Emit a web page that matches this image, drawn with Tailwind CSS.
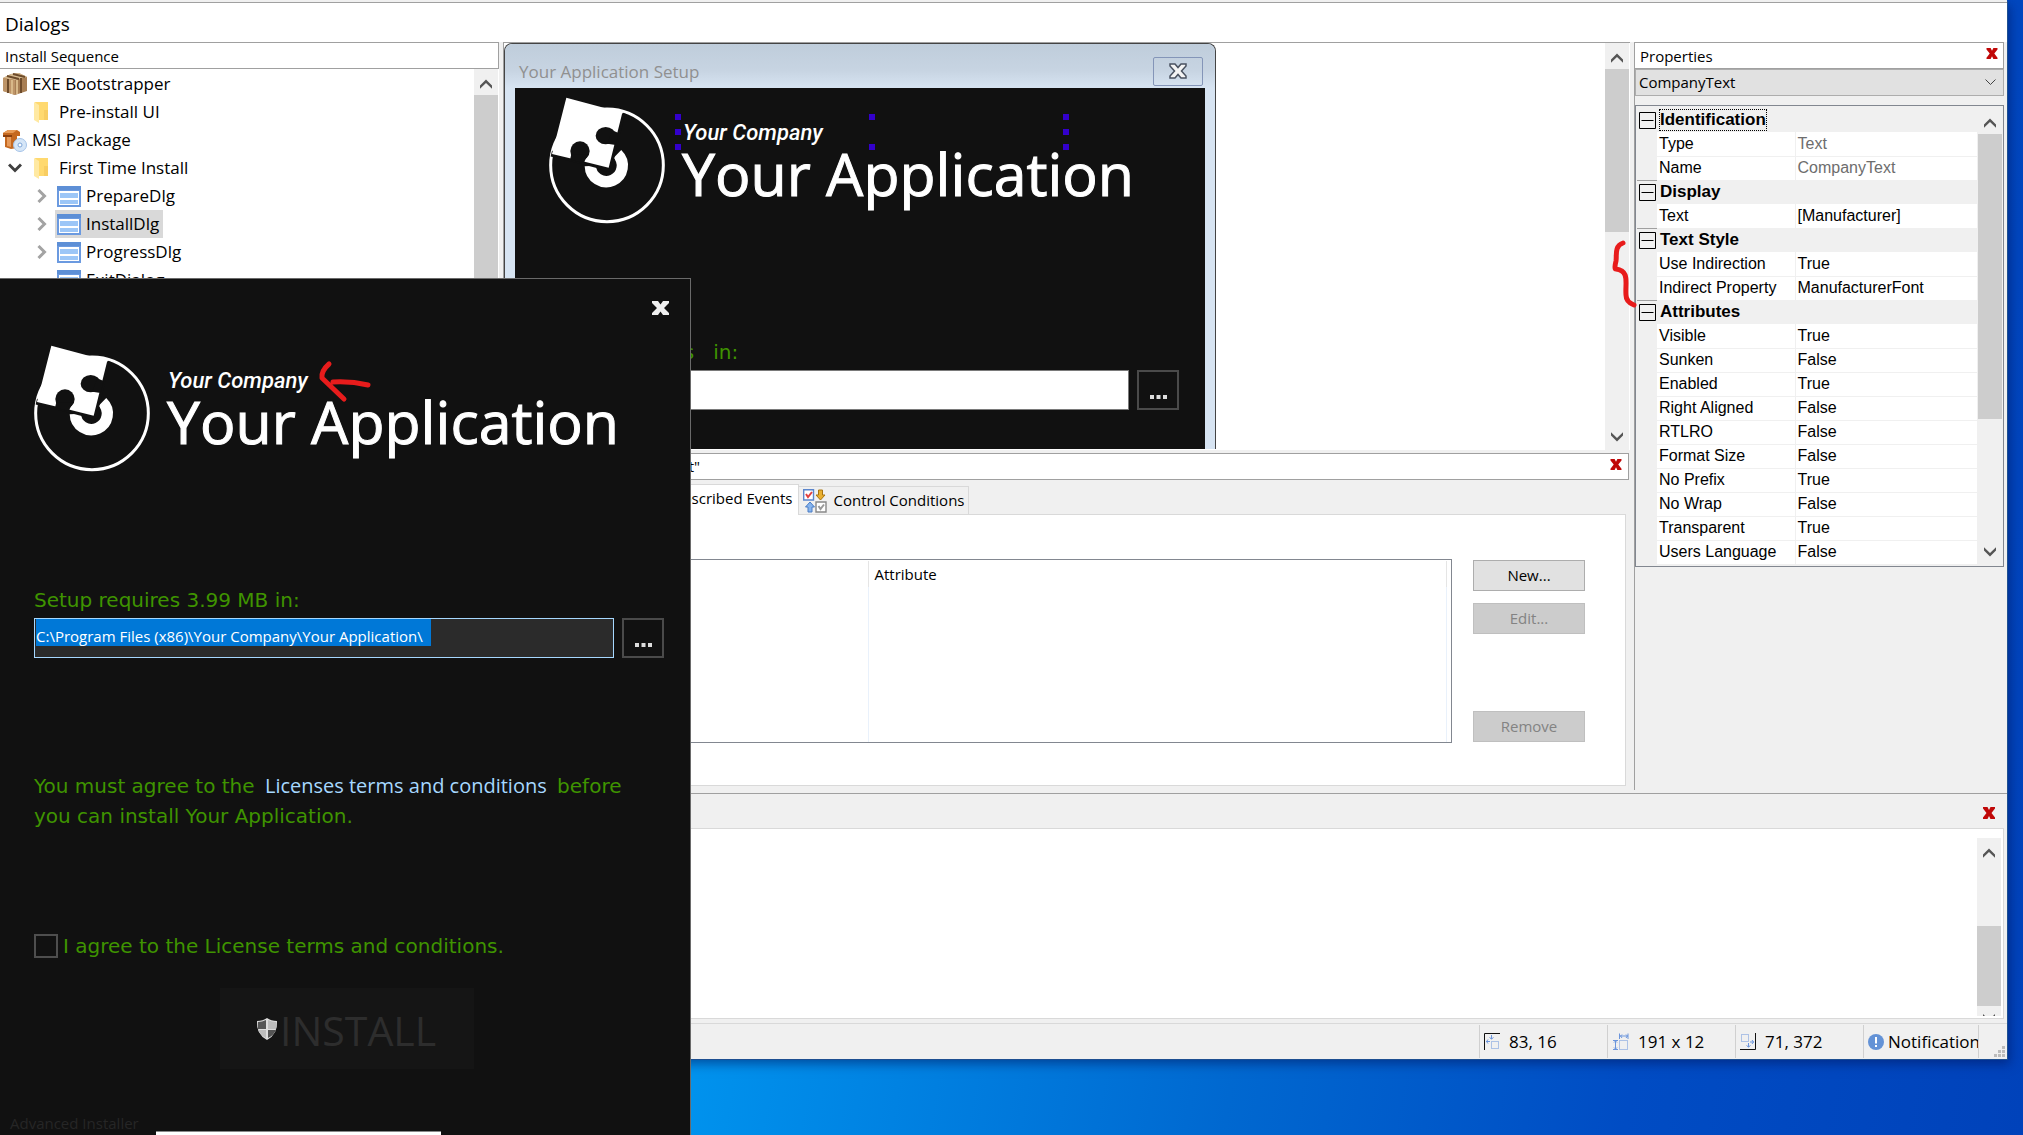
<!DOCTYPE html>
<html lang="en">
<head>
<meta charset="utf-8">
<title>Dialogs</title>
<script src="https://cdn.jsdelivr.net/npm/@tailwindcss/browser@4"></script>
</head>
<body class="relative h-screen overflow-hidden bg-[linear-gradient(100deg,#009cf4_34%,#0068d0_64%,#004cc4_82%,#0042ba_100%)] font-['Open_Sans',sans-serif] text-[15px] text-black">

<svg class="hidden" aria-hidden="true">
  <symbol id="logo" viewBox="40 40 357 393">
    <circle cx="217" cy="251" r="169" fill="none" stroke="#fff" stroke-width="9"/>
    <path d="M248 217A48 48 0 1 1 167 253" fill="none" stroke="#fff" stroke-width="34"/>
    <path d="M264 94L222 259 148 240 50 216" fill="none" stroke="#111" stroke-width="18"/>
    <path d="M226 246L240 230Q246 262 226 270Q206 276 190 254Z" fill="#111"/>
    <path d="M95 48L210 79 268 89 262 97 222 258 150 240 52 217Z" fill="#fff"/>
    <ellipse cx="213" cy="162" rx="30" ry="26" fill="#111"/>
    <path d="M232 146L252 154 243 190 218 186Z" fill="#111"/>
    <circle cx="136" cy="208" r="29" fill="#111"/>
    <path d="M110 218L106 234 148 244 151 236 162 218Z" fill="#111"/>
  </symbol>
  <symbol id="up" viewBox="0 0 12 10"><path d="M0 6.500L6 0.500 12 6.500V9.800L6 4 0 9.800Z" fill="#555"/></symbol>
  <symbol id="down" viewBox="0 0 12 10"><path d="M0 3.500L6 9.500 12 3.500V0.200L6 6 0 0.200Z" fill="#555"/></symbol>
  <symbol id="right" viewBox="0 0 10 14"><path d="M1.500 1L7.500 7 1.500 13" fill="none" stroke="#a3a3a3" stroke-width="3"/></symbol>
  <symbol id="redx" viewBox="0 0 12 12"><path d="M0 0H4.500L6 3 7.500 0H12V1.500L8.500 6 12 10.500V12H7.500L6 9 4.500 12H0V10.500L3.500 6 0 1.500Z" fill="#c00808"/></symbol>
  <symbol id="folder" viewBox="0 0 15 22"><path d="M1 1H14V19H5Z" fill="#ffd96f"/><path d="M0 1L5 4V22L0 19Z" fill="#ffe9a2"/><path d="M10 9H14V19H10Z" fill="#f8cd62"/></symbol>
  <symbol id="dialog" viewBox="0 0 24 21"><path d="M0 0H24V21H0Z" fill="#6b9ae0"/><path d="M0 0H24V4H0Z" fill="#5d8fd6"/><path d="M2 5H22V19H2Z" fill="#fff"/><path d="M3 7H21V12H3ZM3 14H21V18H3Z" fill="#9cc6f7"/></symbol>
</svg>

<main class="absolute top-0 left-0 right-4 bottom-[76px] flex flex-col bg-[#f0f0f0] shadow-[1px_1px_0_#1d4f91,3px_5px_10px_rgba(0,20,90,.5)]">
  <div class="h-[3px] shrink-0 border-b border-[#a0a0a0] bg-[#f0f0f0]"></div>
  <h1 class="flex h-[39px] shrink-0 items-center bg-white px-[5px] pt-2 pb-1 text-[19px]">Dialogs</h1>

  <div class="flex h-[748px] shrink-0">
    <aside class="flex w-[499px] shrink-0 flex-col bg-white">
      <h2 class="flex h-[27px] shrink-0 items-center border border-l-0 border-[#a0a0a0] pt-[2px] pl-[5px]">Install Sequence</h2>
      <div class="flex flex-1">
        <ul class="flex-1 pt-px text-[17px] leading-7 *:flex *:h-7 *:items-center">
          <li class="gap-[5px] pl-[3px]">
            <svg class="h-[23px] w-6" viewBox="0 0 24 23"><path d="M0 5L8 1 16 0 24 4V18L12 22 0 18Z" fill="#a77e54"/><path d="M0 5L8 1 16 0 24 4 12 7Z" fill="#d9bd92"/><path d="M0 5L12 7V22L0 18Z" fill="#bd9468"/><path d="M5 6V20M18 5V20M4 3L16 6M10 1L22 4" stroke="#6d4b2b" stroke-width="2"/><path d="M9 7V21M14 7V21" stroke="#d8b889" stroke-width="2"/></svg>EXE Bootstrapper</li>
          <li class="gap-[10px] pl-[34px]"><svg class="h-[22px] w-[15px]"><use href="#folder"/></svg>Pre-install UI</li>
          <li class="gap-[5px] pl-[3px]">
            <svg class="h-[23px] w-6" viewBox="0 0 24 23"><path d="M0 4L5 1H14L17 3V7H14V19L8 20 2 18V8L0 7Z" fill="#c5681f"/><path d="M0 4L5 1H14L10 4Z" fill="#e89a55"/><path d="M4 8H8V18L4 17Z" fill="#e69a5a"/><path d="M0 7H9" stroke="#8b3f0c" stroke-width="2"/><circle cx="17" cy="16" r="6.500" fill="#d6e6f7" stroke="#a5c3e8"/><circle cx="17" cy="16" r="2" fill="#fff" stroke="#7ba4d8"/></svg>MSI Package</li>
          <li class="pl-2"><svg class="mr-3 h-[10px] w-[14px]" viewBox="0 0 14 10"><path d="M1 1.500L7 7.500 13 1.500" fill="none" stroke="#404040" stroke-width="3"/></svg><svg class="mr-[10px] h-[22px] w-[15px]"><use href="#folder"/></svg>First Time Install</li>
          <li class="pl-[37px]"><svg class="mr-2 h-[14px] w-[10px]"><use href="#right"/></svg><span class="flex items-center gap-[5px] px-[2px] pr-1"><svg class="h-[21px] w-6"><use href="#dialog"/></svg>PrepareDlg</span></li>
          <li class="pl-[37px]"><svg class="mr-2 h-[14px] w-[10px]"><use href="#right"/></svg><span class="flex items-center gap-[5px] bg-[#d9d9d9] px-[2px] pr-1"><svg class="h-[21px] w-6"><use href="#dialog"/></svg>InstallDlg</span></li>
          <li class="pl-[37px]"><svg class="mr-2 h-[14px] w-[10px]"><use href="#right"/></svg><span class="flex items-center gap-[5px] px-[2px] pr-1"><svg class="h-[21px] w-6"><use href="#dialog"/></svg>ProgressDlg</span></li>
          <li class="pl-[55px]"><span class="flex items-center gap-[5px] px-[2px]"><svg class="h-[21px] w-6"><use href="#dialog"/></svg>ExitDialog</span></li>
        </ul>
        <div class="mr-px w-6 bg-[#cdcdcd]"><div class="flex h-[26px] items-center justify-center bg-[#f0f0f0] pt-1"><svg class="h-[10px] w-3"><use href="#up"/></svg></div></div>
      </div>
    </aside>

    <section class="ml-1 flex min-w-0 flex-1 flex-col">
      <div class="flex h-[408px] shrink-0 border-t border-l border-[#a0a0a0] bg-white">
        <div class="flex-1">
          <div class="relative flex h-[406px] w-[712px] flex-col rounded-t-lg border border-b-0 border-[#444] bg-[#d7e4f2] px-[10px]">
            <div class="-mx-[10px] flex h-11 shrink-0 items-center justify-between rounded-t-lg bg-[linear-gradient(#bfcddb,#c7d4e2_60%,#d7e4f2)] pt-3 pr-[12px] pb-[2px] pl-[14px] text-[17px] text-[#909090]">
              <span class="pt-[2px]">Your Application Setup</span>
              <button aria-label="Close preview" class="flex h-[29px] w-[50px] items-center justify-center rounded-xs border border-[#8495b8]"><svg class="h-4 w-[18px]" viewBox="0 0 18 16"><path d="M1 1H6L9 4.500 12 1H17V3L12.500 8 17 13V15H12L9 11.500 6 15H1V13L5.500 8 1 3Z" fill="#f4f4f4" stroke="#4a5260" stroke-width="1.500"/></svg></button>
            </div>
            <div class="flex-1 bg-[#111] pt-[7px] pl-[33px] text-white">
              <div class="flex h-[131px] gap-[15px]">
                <svg class="h-[131px] w-[119px]"><use href="#logo"/></svg>
                <div class="pt-7">
                  <p class="pl-px font-['Roboto',sans-serif] text-[22px] leading-5 font-medium italic">Your Company</p>
                  <p class="text-[59px] leading-[60px] [-webkit-text-stroke:1px_white]">Your Application</p>
                </div>
              </div>
              <p class="mt-28 font-['DejaVu_Sans',sans-serif] text-[20px] leading-7 whitespace-pre text-[#3f9400]">Setup requires   in:</p>
              <div class="mt-1 flex gap-2 pl-px">
                <input aria-label="Install folder preview" class="h-10 w-[580px] border border-[#7a7a7a] bg-white">
                <button aria-label="Browse preview" class="flex h-10 w-[42px] items-end justify-center border-2 border-[#4a4a4a] pb-[9px]"><svg class="h-1 w-[17px]" viewBox="0 0 17 4"><path d="M0 0H4V4H0ZM6.500 0H10.500V4H6.500ZM13 0H17V4H13Z" fill="#ddd"/></svg></button>
              </div>
            </div>
            <div class="absolute top-[70px] left-[170px] grid w-[394px] grid-cols-[6px_6px_6px] justify-between gap-y-[9px] *:h-[6px]">
              <i class="bg-[#3300cc]"></i><i class="bg-[#3300cc]"></i><i class="bg-[#3300cc]"></i>
              <i class="bg-[#3300cc]"></i><i></i><i class="bg-[#3300cc]"></i>
              <i class="bg-[#3300cc]"></i><i class="bg-[#3300cc]"></i><i class="bg-[#3300cc]"></i>
            </div>
          </div>
        </div>
        <div class="mr-px flex w-6 flex-col bg-[#f0f0f0]">
          <div class="flex h-[26px] items-center justify-center pt-1"><svg class="h-[10px] w-3"><use href="#up"/></svg></div>
          <div class="h-[163px] bg-[#cdcdcd]"></div>
          <div class="mt-auto flex h-[26px] items-center justify-center"><svg class="h-[10px] w-3"><use href="#down"/></svg></div>
        </div>
      </div>

      <div class="mt-[3px] mr-px flex h-[27px] shrink-0 items-center justify-between border border-[#a0a0a0] bg-white pr-[6px]">
        <span class="w-[196px] text-right">"CompanyText"</span>
        <button aria-label="Close events"><svg class="mb-1 h-[11px] w-3"><use href="#redx"/></svg></button>
      </div>
      <div class="mt-1 flex h-[30px] shrink-0 items-end pl-[157px]">
        <button class="relative -mb-px flex h-[31px] items-center border border-b-0 border-[#d9d9d9] bg-white pr-[6px] pb-1 pl-1">Subscribed Events</button>
        <button class="flex h-7 items-center gap-[6px] border border-b-0 border-l-0 border-[#d9d9d9] px-1">
          <svg class="h-6 w-6" viewBox="0 0 24 24"><path d="M.7 .7H10.500V11H.7Z" fill="#fff" stroke="#5b85cc" stroke-width="1.400"/><path d="M3 5L5 8 9 3" fill="none" stroke="#e04040" stroke-width="2"/><path d="M15.500 1H19.500V6H22L17.500 11 13 6H15.500Z" fill="#eab030" stroke="#a87410"/><path d="M5 23H9V18H11.500L7 13 2.500 18H5Z" fill="#86b4ee" stroke="#4a7cc4"/><path d="M13 13H23V23H13Z" fill="#fff" stroke="#888" stroke-width="1.400"/><path d="M15.500 17L17.500 20 21 15.500" fill="none" stroke="#999" stroke-width="2"/></svg>
          Control Conditions</button>
      </div>
      <div class="mr-[4px] ml-1 flex h-[272px] shrink-0 border border-[#d9d9d9] bg-white pt-11 pr-10 pl-2">
        <div class="mr-[21px] h-[184px] flex-1 border border-[#828790] pt-px pr-1">
          <table class="h-full w-full table-fixed border-collapse text-left">
            <thead><tr class="h-[26px]"><th class="w-[351px] border-r border-[#e5e5e5]"></th><th class="border-r border-[#e5e5e5] pl-[6px] font-normal">Attribute</th></tr></thead>
            <tbody><tr><td class="border-r border-[#e9f1fb]"></td><td class="border-r border-[#e9f1fb]"></td></tr></tbody>
          </table>
        </div>
        <div class="flex h-[183px] w-28 flex-col gap-3 pt-px *:h-[31px] *:shrink-0 *:border">
          <button class="border-[#adadad] bg-[#e1e1e1]">New...</button>
          <button disabled class="border-[#bfbfbf] bg-[#cccccc] text-[#838383]">Edit...</button>
          <button disabled class="mt-auto border-[#bfbfbf] bg-[#cccccc] text-[#838383]">Remove</button>
        </div>
      </div>
    </section>

    <aside class="ml-1 w-[373px] shrink-0 border-l border-[#a0a0a0] pr-[3px]">
      <div class="flex h-[27px] items-center justify-between border border-l-0 border-[#a0a0a0] bg-white pr-[5px] pl-[5px]">
        <h2 class="pt-px">Properties</h2>
        <button aria-label="Close properties"><svg class="mb-1 h-[11px] w-3"><use href="#redx"/></svg></button>
      </div>
      <div class="relative">
        <select aria-label="Control" class="block h-[27px] w-full appearance-none border border-[#adadad] bg-[#e1e1e1] px-[3px] text-[15px]"><option>CompanyText</option></select>
        <svg class="pointer-events-none absolute top-[10px] right-2 h-[7px] w-[11px]" viewBox="0 0 11 7"><path d="M.5 .5L5.500 5.500 10.500 .5" fill="none" stroke="#444"/></svg>
      </div>
      <div class="mt-[9px] flex border border-[#828790] p-px pt-[2px] font-['Liberation_Sans',sans-serif] text-[16px]">
        <table class="flex-1 border-collapse"><tbody id="properties"></tbody></table>
        <div class="ml-px flex w-6 flex-col">
          <div class="flex h-[26px] items-center justify-center pt-1"><svg class="h-[10px] w-3"><use href="#up"/></svg></div>
          <div class="h-[285px] bg-[#cdcdcd]"></div>
          <div class="mt-auto flex h-[26px] items-center justify-center"><svg class="h-[10px] w-3"><use href="#down"/></svg></div>
        </div>
      </div>
    </aside>
  </div>

  <section class="mt-[3px] flex flex-1 flex-col border-t border-[#a0a0a0] bg-[#f0f0f0]">
    <div class="flex h-[34px] shrink-0 items-center justify-end pt-1 pr-3"><button aria-label="Close log"><svg class="h-3 w-3"><use href="#redx"/></svg></button></div>
    <div class="mr-[3px] mb-1 flex flex-1 justify-end border border-[#d9d9d9] bg-white pt-[9px] pr-[2px] pb-[2px]">
      <div class="flex w-6 flex-col overflow-hidden bg-[#f0f0f0]">
        <div class="flex h-[30px] shrink-0 items-center justify-center"><svg class="h-[10px] w-3"><use href="#up"/></svg></div>
        <div class="mt-auto h-20 shrink-0 bg-[#cdcdcd]"></div>
        <div class="flex h-[10px] shrink-0 items-end justify-center"><svg class="h-[2px] w-3" viewBox="0 0 12 2"><path d="M0 0L2 2H0ZM12 0L10 2H12Z" fill="#555"/></svg></div>
      </div>
    </div>
  </section>

  <footer class="flex h-9 shrink-0 items-stretch justify-end border-t border-[#d9d9d9] py-px text-[17px] *:flex *:items-center *:border-l *:border-[#d0d0d0]">
    <div class="w-32 gap-[9px] pl-1"><svg class="h-[17px] w-4" viewBox="0 0 16 17"><path d="M.5 17V.5H16" fill="none" stroke="#111"/><path d="M7.500 8.500H14.500V15.500H7.500Z" fill="none" stroke="#6b95dc" stroke-dasharray="1 1"/><path d="M2 8.500H6M4 6.500L2.500 8.500 4 10.500M7.500 2V6M5.500 4.500L7.500 6 9.500 4.500" fill="none" stroke="#6b95dc"/></svg>83, 16</div>
    <div class="w-32 gap-[9px] pl-[5px]"><svg class="h-[17px] w-4" viewBox="0 0 16 17"><path d="M6.500 7.500H14.500V16.500H6.500Z" fill="none" stroke="#6b95dc" stroke-dasharray="1 1"/><path d="M6.500 .5V6M15 .5V6M7 3H15M9 1.500L7.500 3 9 5M13 1.500L14.500 3 13 5M0 7.500H5M0 16.500H5M2.500 7.500V16M1 9.500L2.500 8 4 9.500M1 14.500L2.500 16 4 14.500" fill="none" stroke="#6b95dc"/></svg>191 x 12</div>
    <div class="w-32 gap-[9px] pl-1"><svg class="h-[17px] w-4" viewBox="0 0 16 17"><path d="M15.500 0V16.500H0" fill="none" stroke="#111"/><path d="M1.500 1.500H8.500V8.500H1.500Z" fill="none" stroke="#6b95dc" stroke-dasharray="1 1"/><path d="M10 9H14M12 7L13.500 9 12 11M8.500 10V14M6.500 12.500L8.500 14 10.500 12.500" fill="none" stroke="#6b95dc"/></svg>71, 372</div>
    <div class="w-[115px] gap-1 overflow-hidden pl-1"><svg class="h-4 w-4 shrink-0" viewBox="0 0 16 16"><circle cx="8" cy="8" r="8" fill="#6392d6"/><path d="M7 3H9V9.500H7ZM7 11H9V13H7Z" fill="#fff"/></svg>Notification</div>
    <div class="w-[29px] items-end! justify-end pr-[2px] pb-px"><svg class="h-[11px] w-[11px]" viewBox="0 0 11 11"><path d="M8 0H11V3H8ZM8 4H11V7H8ZM4 4H7V7H4ZM0 8H3V11H0ZM4 8H7V11H4ZM8 8H11V11H8Z" fill="#bcbcbc"/></svg></div>
  </footer>
</main>

<svg class="absolute top-[238px] right-[386px] h-[72px] w-[28px]" viewBox="0 0 28 72"><path d="M14 5C5 8 8 18 7 23Q5 31 7 31C21 33 16 45 17 57Q17 64 25 67" fill="none" stroke="#e81c1c" stroke-width="5" stroke-linecap="round" stroke-linejoin="round"/></svg>

<section class="absolute top-[278px] bottom-0 left-0 flex w-[691px] flex-col border-t border-r border-[#6a6a6a] bg-[#111] font-['DejaVu_Sans',sans-serif] text-[20px] text-[#3f9400]">
  <div class="flex h-16 shrink-0 items-start justify-end pt-[22px] pr-[21px]">
    <button aria-label="Close"><svg class="h-[14px] w-[17px]" viewBox="0 0 17 14"><path d="M0 0H6L8.500 3.500 11 0H17V2L12 7 17 12V14H11L8.500 10.500 6 14H0V12L5 7 0 2Z" fill="#f0f0f0"/></svg></button>
  </div>
  <div class="flex h-[131px] shrink-0 gap-[15px] pl-[33px] text-white">
    <svg class="h-[131px] w-[119px]"><use href="#logo"/></svg>
    <div class="pt-7">
      <p class="pl-px font-['Roboto',sans-serif] text-[22px] leading-5 font-medium italic">Your Company</p>
      <p class="font-['Open_Sans',sans-serif] text-[59px] leading-[60px] [-webkit-text-stroke:1px_white]">Your Application</p>
    </div>
  </div>
  <svg class="absolute top-[78px] left-[315px] h-[46px] w-[60px]" viewBox="0 0 60 46"><path d="M14 7Q6 14 7 21L29 42M18 25Q36 24 53 28" fill="none" stroke="#e81c1c" stroke-width="5" stroke-linecap="round" stroke-linejoin="round"/></svg>
  <label for="folder-path" class="mt-28 ml-[34px] leading-7">Setup requires 3.99 MB in:</label>
  <div class="mt-1 flex shrink-0 gap-2 pl-[34px]">
    <input id="folder-path" value="C:\Program Files (x86)\Your Company\Your Application\" class="h-10 w-[580px] border border-[#a6d8ff] bg-[#2b2b2b] bg-[linear-gradient(#0078d7,#0078d7)] bg-[length:395px_27px] bg-[position:1px_0px] bg-no-repeat px-px pb-1 font-['Open_Sans',sans-serif] text-[15px] text-white">
    <button aria-label="Browse" class="flex h-10 w-[42px] items-end justify-center border-2 border-[#4a4a4a] pb-[9px]"><svg class="h-1 w-[17px]" viewBox="0 0 17 4"><path d="M0 0H4V4H0ZM6.500 0H10.500V4H6.500ZM13 0H17V4H13Z" fill="#ddd"/></svg></button>
  </div>
  <p class="mt-[113px] ml-[34px] leading-[30px]">You must agree to the <a href="#" class="px-1 font-['Open_Sans',sans-serif] text-[#a6d8ff]">Licenses terms and conditions</a> before<br>you can install Your Application.</p>
  <label class="mt-[103px] ml-[34px] flex h-6 items-center gap-[5px]"><input type="checkbox" class="h-6 w-6 appearance-none border-2 border-[#4e4e4e]">I agree to the License terms and conditions.</label>
  <button disabled class="mt-[30px] ml-[220px] flex h-[81px] w-[254px] shrink-0 items-center bg-[#151515] pl-9 font-['Open_Sans',sans-serif] text-[41px] text-[#2d2d2d]">
    <svg class="h-[22px] w-[22px]" viewBox="0 0 22 22"><path d="M11 0Q15 3 21 3Q22 16 11 22Q0 16 1 3Q7 3 11 0Z" fill="#ddd"/><path d="M10 2V11H2V4Q6 4 10 2ZM12 12H20Q18 17 12 20Z" fill="#555"/><path d="M12 2V11H20V4Q16 4 12 2ZM10 12H2Q4 17 10 20Z" fill="#bdbdbd"/></svg><span class="pt-1 pl-[2px]">INSTALL</span></button>
  <p class="mt-11 ml-[10px] font-['Open_Sans',sans-serif] text-[15px] leading-5 text-[#262626]">Advanced Installer</p>
  <div class="absolute bottom-0 left-[156px] h-1 w-[285px] border-t border-[#888] bg-white"></div>
</section>

<script>
  const groups = [
    ['Identification', [['Type', 'Text'], ['Name', 'CompanyText']]],
    ['Display', [['Text', '[Manufacturer]']]],
    ['Text Style', [['Use Indirection', 'True'], ['Indirect Property', 'ManufacturerFont']]],
    ['Attributes', [['Visible', 'True'], ['Sunken', 'False'], ['Enabled', 'True'], ['Right Aligned', 'False'], ['RTLRO', 'False'], ['Format Size', 'False'], ['No Prefix', 'True'], ['No Wrap', 'False'], ['Transparent', 'True'], ['Users Language', 'False']]],
  ];
  document.getElementById('properties').innerHTML = groups.map(([name, rows], g) => `
    <tr class="h-6"><th colspan="3" class="${g ? 'border-t border-[#a0a0a0]' : ''} p-0 pl-[2px] text-left text-[17px] leading-[22px]"><span class="flex items-center gap-1"><svg class="h-[17px] w-[17px]" viewBox="0 0 17 17"><path d="M.5 .5H16.500V16.500H.5ZM2.500 8.500H14.500" fill="none" stroke="#000"/></svg><span class="${g ? '' : 'outline outline-1 outline-dotted outline-black'} leading-5">${name}</span></span></th></tr>` +
    rows.map(([key, value]) => `
    <tr class="h-6 leading-[22px]"><td class="w-5 p-0"></td><td class="w-[138px] border-r border-b border-[#f0f0f0] bg-white p-0 pl-[2px]">${key}</td><td class="border-b border-[#f0f0f0] bg-white p-0 pl-[2px] ${name === 'Identification' ? 'text-[#6d6d6d]' : ''}">${value}</td></tr>`).join('')).join('');
</script>
</body>
</html>
